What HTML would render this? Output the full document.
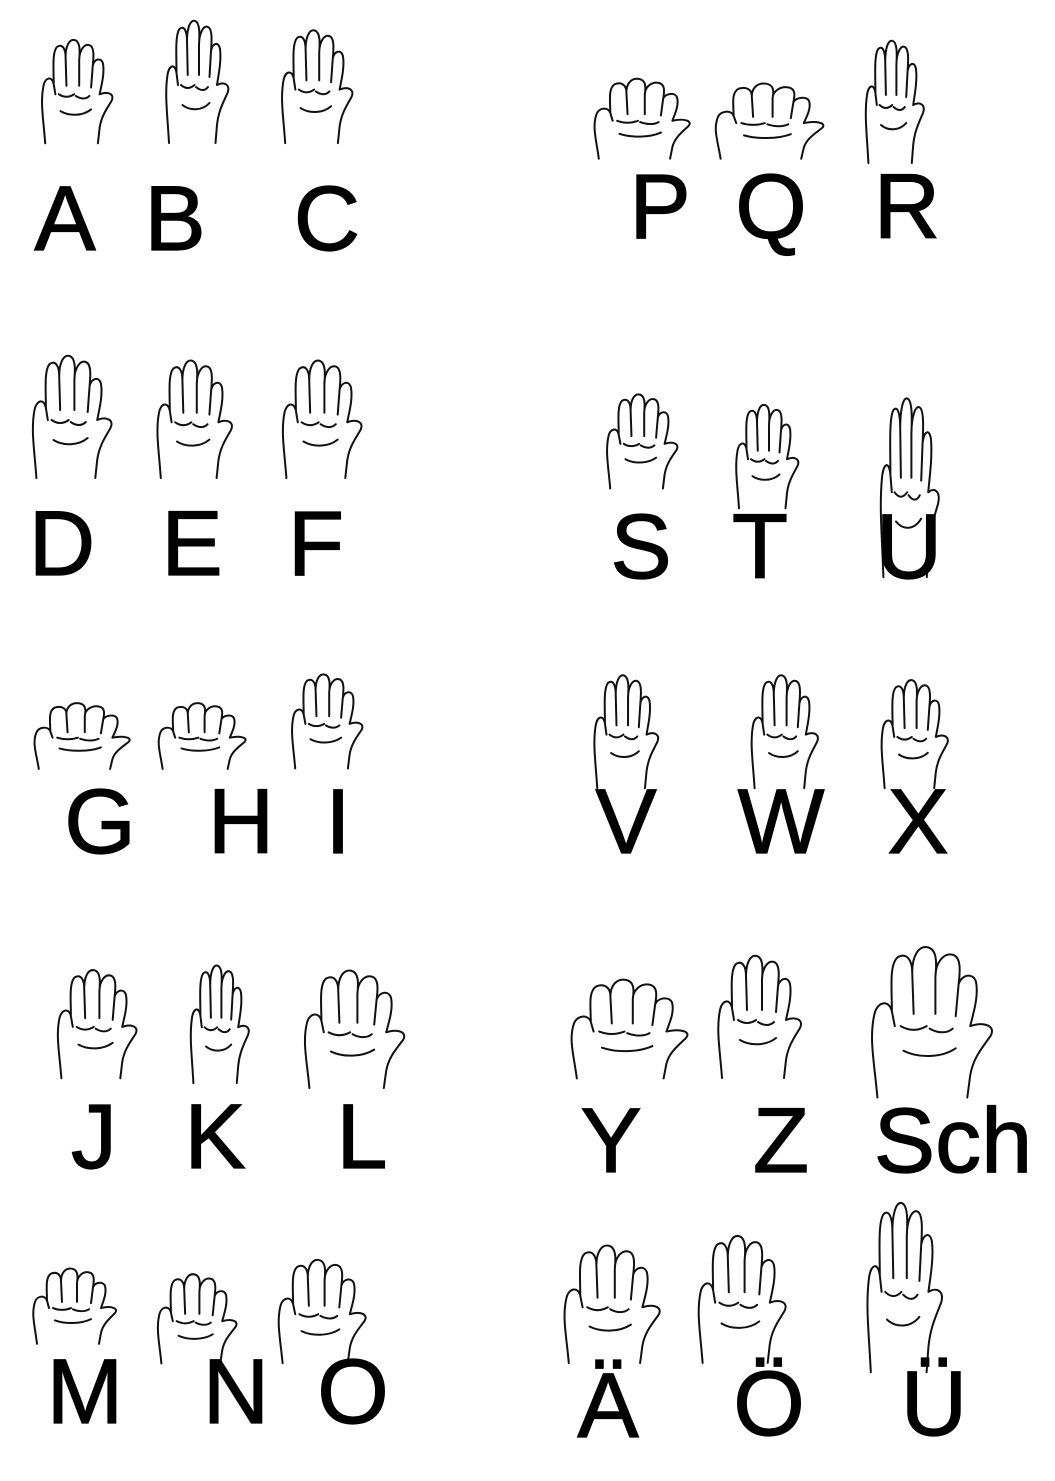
<!DOCTYPE html>
<html><head><meta charset="utf-8"><style>
html,body{margin:0;padding:0;background:#fff}
svg{display:block}
text{font-family:"Liberation Sans",sans-serif;font-size:92px;fill:#000;stroke:#000;stroke-width:1.2;text-anchor:middle}
.h{fill:none;stroke:#111;stroke-width:2;vector-effect:non-scaling-stroke;stroke-linecap:round;stroke-linejoin:round}
</style></head><body>
<svg width="1055" height="1481" viewBox="0 0 1055 1481">
<defs>
<symbol id="hand" viewBox="0 0 100 130" preserveAspectRatio="none">
<path class="h" d="M12 128 C10 100 6 80 10 60 C12 50 20 48 22 58 L24 70 M22 58 C22 40 20 20 26 14 C32 10 36 16 36 26 L37 60 M36 26 C36 14 40 4 47 6 C53 8 53 18 52 30 L52 60 M52 30 C52 18 58 10 64 12 C70 14 69 26 68 36 L66 62 M68 36 C70 28 78 26 80 34 C82 46 78 60 76 70 C86 66 94 70 90 78 C84 88 78 96 76 110 L74 128"/>
<path class="h" d="M28 70 C34 74 40 74 46 70 M48 72 C54 76 60 76 64 72 M30 90 C40 96 56 96 66 88"/>
</symbol>
</defs>
<g>
<use href="#hand" x="35" y="35" width="85" height="110"/>
<use href="#hand" x="160" y="15" width="75" height="130"/>
<use href="#hand" x="275" y="25" width="85" height="120"/>
<use href="#hand" x="585" y="75" width="115" height="85"/>
<use href="#hand" x="705" y="80" width="130" height="80"/>
<use href="#hand" x="860" y="35" width="70" height="130"/>
<use href="#hand" x="25" y="350" width="95" height="130"/>
<use href="#hand" x="150" y="355" width="90" height="125"/>
<use href="#hand" x="275" y="355" width="95" height="125"/>
<use href="#hand" x="600" y="390" width="85" height="100"/>
<use href="#hand" x="730" y="400" width="75" height="110"/>
<use href="#hand" x="875" y="390" width="70" height="190"/>
<use href="#hand" x="25" y="700" width="115" height="70"/>
<use href="#hand" x="150" y="700" width="105" height="70"/>
<use href="#hand" x="285" y="670" width="85" height="100"/>
<use href="#hand" x="588" y="670" width="77" height="120"/>
<use href="#hand" x="745" y="670" width="80" height="120"/>
<use href="#hand" x="875" y="675" width="80" height="115"/>
<use href="#hand" x="50" y="965" width="95" height="115"/>
<use href="#hand" x="185" y="960" width="70" height="125"/>
<use href="#hand" x="295" y="965" width="120" height="125"/>
<use href="#hand" x="560" y="975" width="140" height="105"/>
<use href="#hand" x="710" y="950" width="100" height="130"/>
<use href="#hand" x="860" y="940" width="145" height="160"/>
<use href="#hand" x="25" y="1265" width="100" height="80"/>
<use href="#hand" x="150" y="1270" width="95" height="95"/>
<use href="#hand" x="270" y="1255" width="105" height="110"/>
<use href="#hand" x="555" y="1240" width="115" height="125"/>
<use href="#hand" x="690" y="1230" width="105" height="135"/>
<use href="#hand" x="860" y="1195" width="90" height="180"/>
</g>
<text x="65" y="250">A</text><text x="175" y="250">B</text><text x="327" y="250">C</text>
<text x="660" y="238">P</text><text x="771" y="238">Q</text><text x="907" y="238">R</text>
<text x="62" y="575">D</text><text x="192" y="575">E</text><text x="316" y="575">F</text>
<text x="641" y="578">S</text><text x="760" y="578">T</text><text x="909" y="578">U</text>
<text x="100" y="853">G</text><text x="241" y="853">H</text><text x="338" y="853">I</text>
<text x="626" y="853">V</text><text x="781" y="853">W</text><text x="918" y="853">X</text>
<text x="94" y="1168">J</text><text x="215" y="1168">K</text><text x="362" y="1168">L</text>
<text x="611" y="1172">Y</text><text x="781" y="1172">Z</text><text x="953" y="1172">Sch</text>
<text x="85" y="1423">M</text><text x="236" y="1423">N</text><text x="353" y="1423">O</text>
<text x="608" y="1437">Ä</text><text x="769" y="1435">Ö</text><text x="934" y="1435">Ü</text>
</svg>
</body></html>
